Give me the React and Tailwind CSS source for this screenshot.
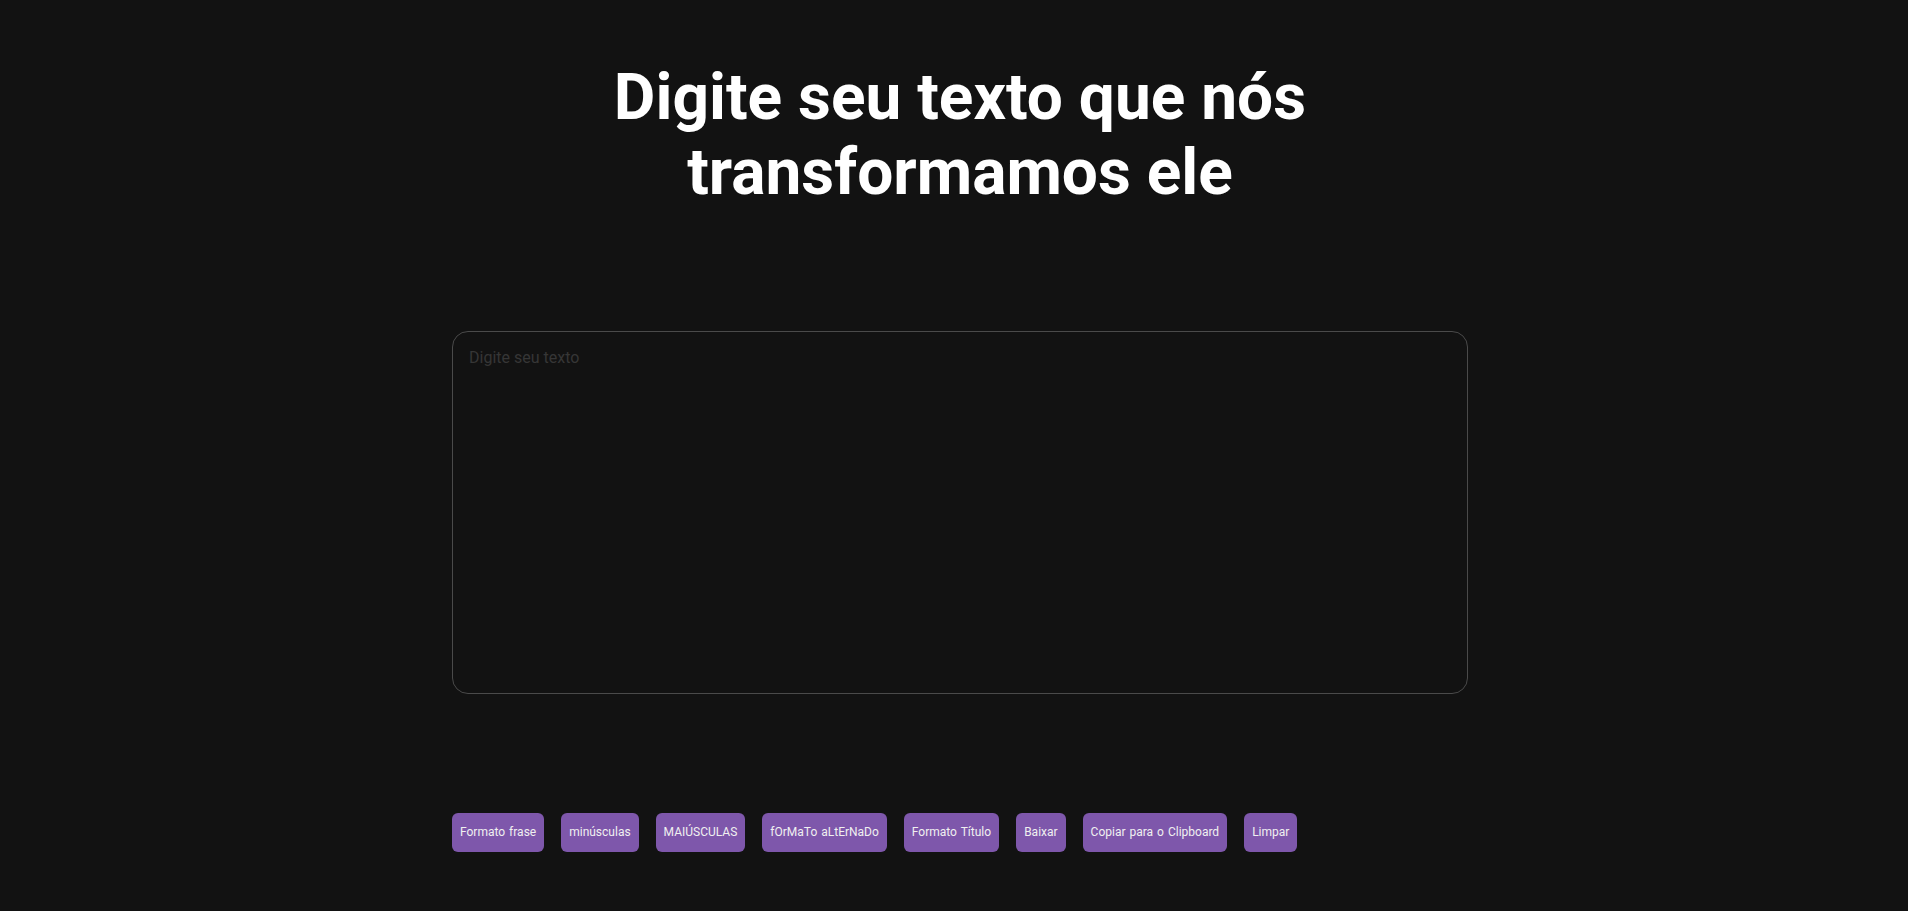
import React, { useState } from 'react';

const actions = [
  'Formato frase',
  'minúsculas',
  'MAIÚSCULAS',
  'fOrMaTo aLtErNaDo',
  'Formato Título',
  'Baixar',
  'Copiar para o Clipboard',
  'Limpar',
];

export default function App() {
  const [text, setText] = useState('');

  return (
    <div
      className="min-h-screen bg-[#121212] pl-3 pt-[60px] pb-[58px] flex flex-col items-center"
      style={{ fontFamily: 'Roboto, "Liberation Sans", sans-serif' }}
    >
      <h1 className="max-w-[800px] text-center text-[64px] leading-[75px] font-bold text-white">
        Digite seu texto que nós transformamos ele
      </h1>

      <div className="w-[1016px] mt-[121px]">
        <textarea
          value={text}
          onChange={(e) => setText(e.target.value)}
          placeholder="Digite seu texto"
          className="block w-full h-[363px] resize-none rounded-2xl border border-[#4a4a4a] bg-[#121212] p-4 text-base leading-[19px] text-white placeholder:text-[#363636] outline-none"
        />

        <div className="mt-[119px] flex gap-[17px]">
          {actions.map((label) => (
            <button
              key={label}
              className="rounded-md bg-[#7e57ab] px-2 py-3 text-xs leading-[15px] [word-spacing:1px] text-[#f0f0f0]"
            >
              {label}
            </button>
          ))}
        </div>
      </div>
    </div>
  );
}
